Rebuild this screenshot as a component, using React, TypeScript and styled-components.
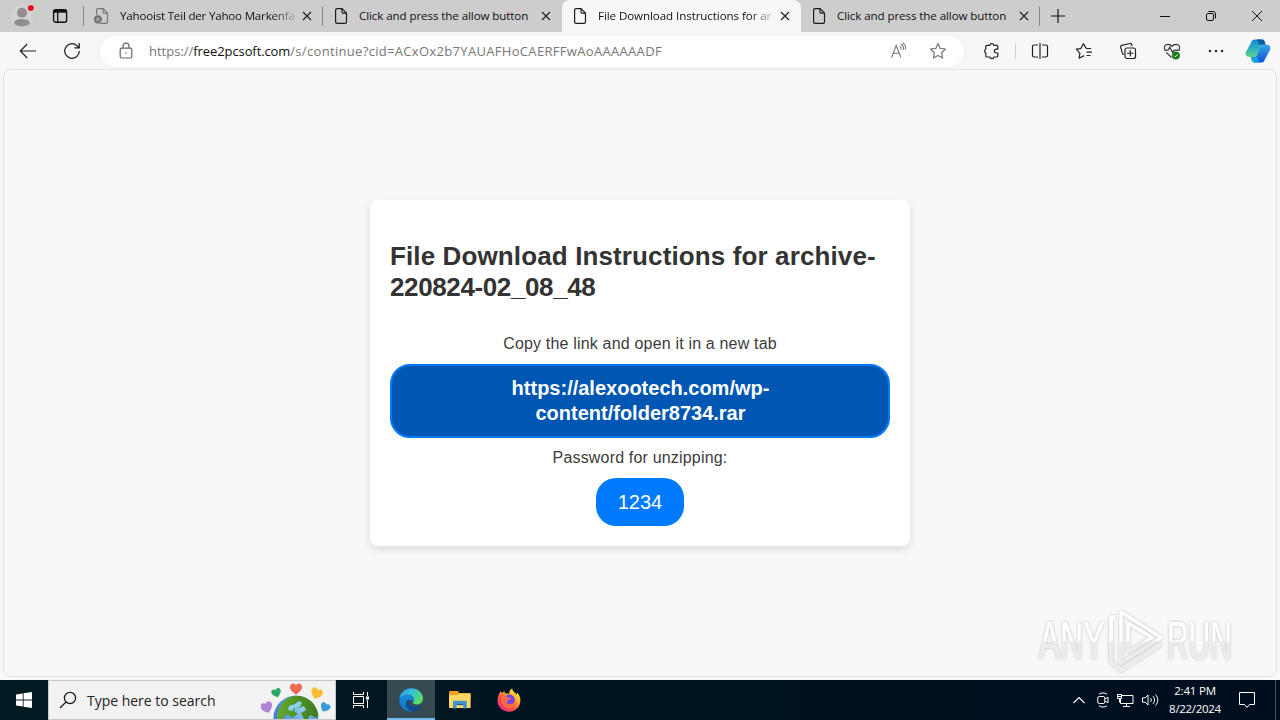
import React from 'react';
import styled, { createGlobalStyle } from 'styled-components';

const GlobalStyle = createGlobalStyle`
  * {
    box-sizing: border-box;
  }
  body {
    margin: 0;
    background: #f7f7f7;
    font-family: 'Open Sans', 'Noto Sans', sans-serif;
    overflow: hidden;
  }
  svg {
    display: block;
    flex: none;
  }
`;

interface TabItem {
  title: string;
  spacing: number;
  active?: boolean;
  blocked?: boolean;
  fade?: boolean;
}

const tabs: TabItem[] = [
  { title: 'Yahooist Teil der Yahoo Markenfa', spacing: -0.21, blocked: true, fade: true },
  { title: 'Click and press the allow button', spacing: -0.1 },
  { title: 'File Download Instructions for ar', spacing: -0.09, active: true, fade: true },
  { title: 'Click and press the allow button', spacing: -0.1 },
];

const PageIcon: React.FC<{ blocked?: boolean }> = ({ blocked }) => (
  <svg width="16" height="18" viewBox="0 0 16 18" fill="none" stroke={blocked ? '#777' : '#1b1b1b'} strokeWidth="1.2">
    <path d="M2.6 3.2c0-.9.6-1.6 1.5-1.6h5l4.4 4.6v8.6c0 .9-.6 1.6-1.5 1.6H4.1c-.9 0-1.5-.7-1.5-1.6z" />
    <path d="M9 1.8v3.1c0 .8.5 1.3 1.3 1.3h3" />
    {blocked && (
      <>
        <circle cx="3.8" cy="12.4" r="4.6" fill="#777" stroke="#cdcdcd" strokeWidth="0.8" />
        <path d="m2.4 11 2.8 2.8m0-2.8-2.8 2.8" stroke="#cdcdcd" strokeWidth="1" />
      </>
    )}
  </svg>
);

const CloseIcon = () => (
  <svg width="10" height="10" viewBox="0 0 10 10" stroke="#222" strokeWidth="1.2">
    <path d="m1 1 8 8M9 1 1 9" />
  </svg>
);

const ProfileIcon = () => (
  <svg width="28" height="32" viewBox="0 0 28 32">
    <circle cx="14" cy="16" r="11" fill="#d2d2d2" />
    <circle cx="14" cy="12.7" r="5" fill="#918e8c" />
    <ellipse cx="14" cy="22.7" rx="7.8" ry="3.7" fill="#918e8c" />
    <circle cx="22.8" cy="8" r="3.9" fill="#e8d5d5" />
    <circle cx="22.8" cy="8" r="3" fill="#e0101c" />
  </svg>
);

const TabActionsIcon = () => (
  <svg width="16" height="16" viewBox="0 0 16 16" fill="none" stroke="#111">
    <rect x="1.6" y="1.6" width="13" height="12.6" rx="2" strokeWidth="1.4" />
    <path d="M2 3.2h12" strokeWidth="3" />
    <path d="M5.7 4v10" strokeWidth="1.3" />
  </svg>
);

const ToolbarIcons = {
  back: (
    <svg width="18" height="18" viewBox="0 0 18 18" fill="none" stroke="#222" strokeWidth="1.2">
      <path d="M17 9H1.5M8.200 2 1.300 9l6.900 7" />
    </svg>
  ),
  reload: (
    <svg width="18" height="18" viewBox="0 0 18 18" fill="none" stroke="#222" strokeWidth="1.3">
      <path d="M16.300 9a7.300 7.300 0 1 1-2.600-5.600l2.300 2.200M16.200 1v4.800h-4.800" />
    </svg>
  ),
  lock: (
    <svg width="14" height="18" viewBox="0 0 14 18" fill="none" stroke="#666" strokeWidth="1.2">
      <rect x="1.2" y="6.2" width="11.6" height="9.8" rx="1.5" />
      <path d="M4 6V4.200a3 3 0 0 1 6 0V6" />
      <circle cx="7" cy="11" r=".8" fill="#666" stroke="none" />
    </svg>
  ),
  star: (
    <svg width="18" height="18" viewBox="0 0 18 18" fill="none" stroke="#777" strokeWidth="1.2" strokeLinejoin="round">
      <path d="m9 1.500 2.200 4.900 5.300.6-3.900 3.700 1 5.400L9 13.500l-4.600 2.600 1-5.400L1.500 7l5.300-.6z" />
    </svg>
  ),
  puzzle: (
    <svg width="18" height="18" viewBox="0 0 18 18" fill="none" stroke="#222" strokeWidth="1.2" strokeLinejoin="round">
      <path d="M3.800 3.300h3a2.100 2.100 0 0 1 4.100 0h2.900c.6 0 1 .4 1 1v2.900h-1.500a1.900 1.900 0 0 0 0 3.800h1.500v3c0 .6-.4 1-1 1h-2.900a2.100 2.100 0 0 1-4.100 0h-3c-.6 0-1-.4-1-1v-3a2.100 2.100 0 0 1 0-3.800V4.300c0-.6.4-1 1-1z" />
    </svg>
  ),
  split: (
    <svg width="18" height="18" viewBox="0 0 18 18" fill="none" stroke="#222" strokeWidth="1.2">
      <path d="M7 3H3a1.500 1.500 0 0 0-1.500 1.500v9A1.500 1.500 0 0 0 3 15h4M11 3h4a1.500 1.500 0 0 1 1.500 1.500v9A1.500 1.500 0 0 1 15 15h-4M9 1v16" />
    </svg>
  ),
  favorites: (
    <svg width="18" height="18" viewBox="0 0 18 18" fill="none" stroke="#222" strokeWidth="1.2" strokeLinejoin="round">
      <path d="M16.200 6.500h-4.800L8.300 1.700 5.900 6.600l-4.600.6 3.600 3.900-.8 5.100 5-2.600M11.500 10.200H17M11.500 13.500h4" />
    </svg>
  ),
  collections: (
    <svg width="18" height="18" viewBox="0 0 18 18" fill="none" stroke="#222" strokeWidth="1.2" strokeLinecap="round">
      <rect x="6" y="6" width="10.5" height="10.5" rx="2" />
      <path d="M11.250 8.500v5.500M8.500 11.250h5.500M13 3.600l-.3-1.100a1.500 1.500 0 0 0-1.900-1L2.700 3.300a1.500 1.500 0 0 0-1 1.900l1.700 6.100c.1.500.5.900 1 1" />
    </svg>
  ),
  health: (
    <svg width="18" height="18" viewBox="0 0 18 18" fill="none" stroke="#333" strokeWidth="1.2" strokeLinejoin="round">
      <path d="M1.700 7.300C.8 4.500 2.300 2.300 4.800 2.300 6.800 2.300 8.200 3.200 9 4.400c.8-1.200 2.200-2.100 4.200-2.100 2.500 0 4 2.200 3.100 5M3.300 10.300 8.500 15.500M1 8.200h4L6.800 5l2.700 5.500 1.700-2.300H17" />
      <circle cx="12.9" cy="13.5" r="4" fill="#187b1b" stroke="none" />
      <path d="m11.200 13.600 1.200 1.200 2.200-2.300" stroke="#fff" strokeWidth="1" />
    </svg>
  ),
  more: (
    <svg width="18" height="18" viewBox="0 0 18 18" fill="#222">
      <circle cx="3" cy="9" r="1.2" />
      <circle cx="9" cy="9" r="1.2" />
      <circle cx="15" cy="9" r="1.2" />
    </svg>
  ),
};

const ReadAloudIcon = () => (
  <svg width="18" height="18" viewBox="0 0 18 18" fill="none" stroke="#777" strokeWidth="1.1">
    <path d="M1.500 15.500 6.200 3.500l4.700 12M3.200 11.300h6M9.800 4.300a4.500 4.500 0 0 1 1.400 3.500M11 2a6.500 6.500 0 0 1 2.600 5.800M12.500.6a8 8 0 0 1 3.200 7" />
  </svg>
);

const CopilotIcon = () => (
  <svg width="26" height="24" viewBox="0 0 26 24">
    <defs>
      <linearGradient id="cpLeft" x1="0" y1="0" x2="0" y2="1">
        <stop offset="0" stopColor="#1588d8" />
        <stop offset=".55" stopColor="#2fb4bd" />
        <stop offset="1" stopColor="#63d184" />
      </linearGradient>
      <linearGradient id="cpRight" x1="0" y1="0" x2="0" y2="1">
        <stop offset="0" stopColor="#39a5e8" />
        <stop offset="1" stopColor="#0a4fd6" />
      </linearGradient>
    </defs>
    <path d="M6.300 3C7 1.200 8.200.5 10 .5h7c1.400 0 2.200.8 2.700 2.300l.9 3H16l-3.600 10.500c-.5 1.200-1.300 1.700-2.500 1.700H4.500C1.600 18-.2 16.200.8 13.200z" fill="url(#cpLeft)" />
    <path d="M11.500.5H17c1.400 0 2.200.8 2.700 2.300l.9 3h-5.400c-1 0-1.500-.5-1.800-1.500L12.900 2z" fill="#0c5f9f" />
    <path d="M19.600 21c-.6 1.700-1.500 2.500-3 2.500H9.500c-1.500 0-2.300-.9-2.700-2.500L6 18h3.600c1.200 0 2-.5 2.500-1.700L15.400 7.500c.4-1.200 1.200-1.700 2.400-1.700h4c2.900 0 4.200 2 3.400 4.700z" fill="url(#cpRight)" />
    <path d="M6 18h5.200c1 0 1.500.5 1.800 1.500l.6 2.200c.3 1 .9 1.500 1.700 1.800H9.500c-1.500 0-2.300-.9-2.700-2.500z" fill="#08a5e8" />
  </svg>
);

const Watermark = () => (
  <WatermarkBox>
    <svg width="204" height="72" viewBox="0 0 204 72" overflow="visible">
      <defs>
        <linearGradient id="wm" x1="0" y1="0" x2="0" y2="72" gradientUnits="userSpaceOnUse">
          <stop offset=".5" stopColor="#ffffff" />
          <stop offset=".51" stopColor="#ececec" />
        </linearGradient>
        <filter id="wmShadow" x="-10%" y="-10%" width="120%" height="120%">
          <feDropShadow dx="0" dy="0" stdDeviation="1.7" floodColor="#000" floodOpacity=".26" />
        </filter>
      </defs>
      <g filter="url(#wmShadow)" fill="url(#wm)">
        <g fontFamily="'Liberation Sans Narrow', 'Liberation Sans', Arial, sans-serif" fontSize="53">
          <text x="0" y="54" transform="translate(5 0) scale(.6 1)">
            ANY
          </text>
          <text x="0" y="54" transform="translate(133 0) scale(.565 1)">
            RUN
          </text>
        </g>
        <g fill="none" stroke="url(#wm)" strokeWidth="4" strokeLinejoin="round">
          <path d="M87 7v51l40-25.500zM94 18v29l24-14.500z" strokeWidth="3" />
          <path d="M81 12c-3 0-4 1-4 4v41l10 8 40-26" />
        </g>
      </g>
    </svg>
  </WatermarkBox>
);

const GlobeArt = () => (
  <svg width="70" height="38" viewBox="0 0 70 38">
    <defs>
      <radialGradient id="sea" cx=".65" cy=".3" r=".8">
        <stop offset="0" stopColor="#8fd0f2" />
        <stop offset=".6" stopColor="#4f93e6" />
        <stop offset="1" stopColor="#3b62d0" />
      </radialGradient>
      <linearGradient id="land" x1="0" y1="0" x2="1" y2="0">
        <stop offset="0" stopColor="#64a82c" />
        <stop offset="1" stopColor="#3d7a20" />
      </linearGradient>
      <clipPath id="globeClip">
        <circle cx="35" cy="37" r="22.5" />
      </clipPath>
      <path id="heart" d="M0 5.500C-4.500 2.500-6 .2-6-2c0-3.700 4.400-4.600 6-1.700C1.600-6.600 6-5.700 6-2 6 .2 4.500 2.500 0 5.500z" />
    </defs>
    <circle cx="35" cy="37" r="22.5" fill="url(#sea)" />
    <g clipPath="url(#globeClip)" fill="url(#land)">
      <path d="M23 20c6-6 17-7 25-3 5 4 9 10 10 17l-3 3-6-3-2 4h-4l-3-6 5-3-2-4-5 2-4-1-1 4 4 3-6 4-5-4-5 5h-5c0-8 3-14 7-18z" />
    </g>
    <path d="m28 25 6-2 4-3 3 2-2 4-6 1-2 3-4-1z" fill="#8cd0ef" />
    <use href="#heart" transform="translate(35 8)" fill="#ef6a55" />
    <use href="#heart" transform="translate(15.500 12) rotate(-18) scale(.8)" fill="#2ba866" />
    <use href="#heart" transform="translate(55.500 12.500) rotate(22) scale(.98)" fill="#f6bd32" />
    <use href="#heart" transform="translate(5.800 26.500) rotate(-20)" fill="#b184d6" />
    <use href="#heart" transform="translate(64 26.500) rotate(28) scale(.82)" fill="#399bdd" />
  </svg>
);

const WindowsLogo = () => (
  <svg width="16" height="16" viewBox="0 0 16 16" fill="#fff">
    <path d="M0 2.400 6.800 1.400v6.200H0zM7.600 1.300 16 0v7.600H7.600zM0 8.400h6.800v6.200L0 13.600zM7.600 8.400H16V16l-8.400-1.300z" />
  </svg>
);

const EdgeLogo = () => (
  <svg width="24" height="24" viewBox="0 0 24 24">
    <defs>
      <linearGradient id="edgeTop" x1="0" y1="0" x2="1" y2="0.600">
        <stop offset="0" stopColor="#2695e4" />
        <stop offset=".5" stopColor="#35bfd8" />
        <stop offset="1" stopColor="#5ce060" />
      </linearGradient>
      <linearGradient id="edgeLow" x1="0" y1="0" x2="0" y2="1">
        <stop offset="0" stopColor="#168be0" />
        <stop offset="1" stopColor="#1072c6" />
      </linearGradient>
    </defs>
    <path d="M.3 10.800C1.300 4.600 6 .2 12.200.2 19 .2 24 5 24 10.600c0 3.700-2.900 6-6.200 6-2.500 0-4-.8-4-1.500 0-.8 1.200-1.200 1.200-3.300 0-2.800-2.700-5-6.100-5-3.900 0-7 1.700-8.600 4z" fill="url(#edgeTop)" />
    <path d="M.3 10.800c1.600-2.700 4.900-4.100 8.100-4.100 3.600 0 6.600 2.200 6.600 5.200 0 .9-.3 1.600-.7 2.100-1-2.100-3.500-3-5.300-1.900-2.900 1.900-1.600 7.900 4.700 11.600C6.600 24.500 0 19 .3 10.800z" fill="url(#edgeLow)" />
    <path d="M9 12.100c-4.200 2.700-1.800 11 5.100 11.600 3.600-.3 6.700-2.600 8.300-5.600.3-.7-.2-1-.8-.7-4.700 2.400-12.700.9-12.600-5.300z" fill="#114a8b" />
  </svg>
);

const FolderIcon = () => (
  <svg width="22" height="20" viewBox="0 0 22 20">
    <path d="M0 2.500C0 1.600.5 1 1.400 1h7.200L10.500 3H20c1 0 1.600.5 1.600 1.400V9H0z" fill="#eca421" />
    <path d="M0 5.200h8.500l1.800-1.400h11.300V18H0z" fill="#ffd766" />
    <path d="M4 18.500V12c0-.8.5-1.300 1.300-1.300h11.200c.8 0 1.300.5 1.300 1.300v6.500h-3.500v-3.300H7.500v3.300z" fill="#4094cd" />
    <path d="M7.500 14.500h6.800" stroke="#27658d" />
  </svg>
);

const FirefoxIcon = () => (
  <svg width="24" height="24" viewBox="0 0 24 24">
    <defs>
      <linearGradient id="fox" x1=".85" y1=".1" x2=".2" y2=".95">
        <stop offset="0" stopColor="#ffe83f" />
        <stop offset=".35" stopColor="#ffa52c" />
        <stop offset=".65" stopColor="#ff4f45" />
        <stop offset="1" stopColor="#ec2789" />
      </linearGradient>
    </defs>
    <path d="M3.500 3.200 5.200 5l2.100-2 .9 2.400c1.600-.2 3 .1 4 .7C11.800 3.500 13 1.500 15.300.4c-.1 3.300 3.400 4.200 4.600 6.500l.2-2.300c2.200 2.200 3.300 5 3.300 7.800 0 6.100-5 11.300-11.500 11.300S.5 18.700.5 12.800c0-3.600 1.200-6.900 3-9.600z" fill="url(#fox)" />
    <circle cx="12.4" cy="12" r="5.400" fill="#7542e4" />
    <path d="M4.500 8.700c2.400-1.300 4.700-.9 6.800.7l3 .6c.2 1.500-2.500 1.800-3.200 2.400-.7.700.2 2.300-1.800 2.100 1.500 2 4.800 1.700 6.600.8 1.500-.8 2-2.500 1.700-4.500 1.600 2 1.900 4 1.200 6.100-1.100 2.500-4 3.900-7.200 3.600-5.700-.3-8.300-6-7.100-11.800z" fill="#ff713b" fillOpacity=".85" />
  </svg>
);

const App: React.FC = () => {
  return (
    <Screen>
      <GlobalStyle />
      <TabStrip>
        <TabStripLead>
          <ProfileIcon />
          <TabActionsIcon />
        </TabStripLead>
        {tabs.map((tab, index) => (
          <Tab key={index} $active={tab.active} $noDivider={tabs[index + 1]?.active}>
            <PageIcon blocked={tab.blocked} />
            <TabTitle $spacing={tab.spacing} $fade={tab.fade}>
              {tab.title}
            </TabTitle>
            <CloseIcon />
          </Tab>
        ))}
        <NewTab>
          <svg width="14" height="14" viewBox="0 0 14 14" stroke="#111" strokeWidth="1.2">
            <path d="M7 0v14M0 7h14" />
          </svg>
        </NewTab>
        <WindowButtons>
          <svg width="10" height="10" viewBox="0 0 10 10" stroke="#111">
            <path d="M0 5.500h10" />
          </svg>
          <svg width="10" height="10" viewBox="0 0 10 10" fill="none" stroke="#111">
            <rect x=".5" y="2.5" width="7" height="7" rx="1.5" />
            <path d="M2.500.5H7A2.500 2.500 0 0 1 9.500 3v4.500" />
          </svg>
          <svg width="10" height="10" viewBox="0 0 10 10" stroke="#111">
            <path d="m0 0 10 10M10 0 0 10" />
          </svg>
        </WindowButtons>
      </TabStrip>

      <Toolbar>
        <NavButtons>
          {ToolbarIcons.back}
          {ToolbarIcons.reload}
        </NavButtons>
        <AddressBar>
          {ToolbarIcons.lock}
          <Url>
            https://<b>free2pcsoft.com</b>
            <UrlPath>/s/continue?cid=ACxOx2b7YAUAFHoCAERFFwAoAAAAAADF</UrlPath>
          </Url>
          <ReadAloudIcon />
          {ToolbarIcons.star}
        </AddressBar>
        <ToolButtons>
          {ToolbarIcons.puzzle}
          <ToolDivider />
          {ToolbarIcons.split}
          {ToolbarIcons.favorites}
          {ToolbarIcons.collections}
          {ToolbarIcons.health}
          {ToolbarIcons.more}
        </ToolButtons>
        <CopilotIcon />
      </Toolbar>

      <Viewport>
        <Card>
          <Heading>
            <HeadingLine $spacing={0.12}>File Download Instructions for archive-</HeadingLine>
            <HeadingLine $spacing={-0.38}>220824-02_08_48</HeadingLine>
          </Heading>
          <Note>Copy the link and open it in a new tab</Note>
          <LinkBox>
            https://alexootech.com/wp-
            <br />
            content/folder8734.rar
          </LinkBox>
          <Note>Password for unzipping:</Note>
          <Password>1234</Password>
        </Card>
        <Watermark />
      </Viewport>

      <Taskbar>
        <TaskButton $width={48}>
          <WindowsLogo />
        </TaskButton>
        <SearchBox>
          <svg width="18" height="18" viewBox="0 0 18 18" fill="none" stroke="#1b1b1b" strokeWidth="1.3">
            <circle cx="11" cy="7" r="5.6" />
            <path d="m7 11-6 6" />
          </svg>
          <SearchText>Type here to search</SearchText>
          <GlobeArt />
        </SearchBox>
        <TaskButton $width={51}>
          <TaskViewIcon />
        </TaskButton>
        <TaskButton $width={48} $active>
          <EdgeLogo />
        </TaskButton>
        <TaskButton $width={49}>
          <FolderIcon />
        </TaskButton>
        <TaskButton $width={49}>
          <FirefoxIcon />
        </TaskButton>
        <Tray>
          <svg width="12" height="8" viewBox="0 0 12 8" fill="none" stroke="#fff" strokeWidth="1.1">
            <path d="m.5 7 5.500-5.500L11.500 7" />
          </svg>
          <svg width="12" height="16" viewBox="0 0 12 16" fill="none" stroke="#fff">
            <rect x=".8" y="4.5" width="7" height="7" rx="1.5" />
            <path d="M8 7l3-1.800v5.600L8 9M2 2.200C4.300.5 7.700.5 10 2.200M2 13.800c2.300 1.700 5.700 1.700 8 0" />
          </svg>
          <svg width="17" height="15" viewBox="0 0 17 15" fill="none" stroke="#fff">
            <path d="M5 2.500h11v8H3.500V6M9.500 10.500v3M6 13.500h7M.5 1.500h4v4h-4zM2.500 5.500v4M1 3.500h3" />
          </svg>
          <svg width="17" height="14" viewBox="0 0 17 14" fill="none" stroke="#fff">
            <path d="M.5 4.800h2.700L6 2v10L3.200 9.200H.5zM8.500 5c1 1.200 1 2.800 0 4M11 3.200c2 2.200 2 5.400 0 7.600M13.500 1.500c3 3.200 3 7.800 0 11" />
          </svg>
          <Clock>
            <span>2:41 PM</span>
            <ClockDate>8/22/2024</ClockDate>
          </Clock>
          <svg width="16" height="17" viewBox="0 0 16 17" fill="none" stroke="#fff">
            <path d="M.5.500h15v12h-5l-2.500 3-2.500-3h-5z" />
          </svg>
        </Tray>
      </Taskbar>
    </Screen>
  );
};

const TaskViewIcon = () => (
  <svg width="17" height="16" viewBox="0 0 17 16" fill="none" stroke="#fff">
    <path d="M.5 0v2.500h10V0M.5 16v-2.500h10V16M.5 4.500h10v7H.5zM14.500 0v4M14.500 8v8" />
    <path d="M13 4.500h3v3h-3z" fill="#fff" stroke="none" />
  </svg>
);

const Screen = styled.div`
  width: 1280px;
  height: 720px;
  display: flex;
  flex-direction: column;
  overflow: hidden;
`;

const TabStrip = styled.div`
  flex: none;
  height: 32px;
  display: flex;
  background: #cdcdcd;
`;

const TabStripLead = styled.div`
  width: 84px;
  display: flex;
  align-items: center;
  padding-left: 8px;
  gap: 16px;
  background: linear-gradient(#888, #888) right center / 1px 20px no-repeat;
`;

const Tab = styled.div<{ $active?: boolean; $noDivider?: boolean }>`
  width: 239px;
  display: flex;
  align-items: center;
  padding: 0 10px;
  border-radius: 8px 8px 0 0;
  background: ${props =>
    props.$active
      ? '#f7f7f7'
      : props.$noDivider
        ? 'none'
        : 'linear-gradient(#888, #888) right center / 1px 20px no-repeat'};
`;

const TabTitle = styled.div<{ $spacing: number; $fade?: boolean }>`
  width: 177px;
  margin: 0 5px 1px 10px;
  overflow: hidden;
  white-space: nowrap;
  font-size: 11.6px;
  line-height: 18px;
  letter-spacing: ${props => props.$spacing}px;
  color: #111;
  ${props => props.$fade && 'mask-image: linear-gradient(90deg, #000 152px, transparent 180px);'}
`;

const NewTab = styled.div`
  padding: 9px 0 0 11px;
`;

const WindowButtons = styled.div`
  display: flex;
  align-items: center;
  gap: 36px;
  margin-left: auto;
  padding-right: 18px;
`;

const Toolbar = styled.div`
  flex: none;
  height: 37px;
  display: flex;
  align-items: center;
  padding-right: 9px;
  background: #f7f7f7;
`;

const NavButtons = styled.div`
  width: 100px;
  display: flex;
  gap: 26px;
  padding-left: 19px;
`;

const AddressBar = styled.div`
  width: 864px;
  height: 31px;
  margin-top: 1px;
  display: flex;
  align-items: center;
  padding: 0 17px 0 19px;
  border-radius: 16px;
  background: #fff;
  box-shadow: 0 0 2px rgba(0, 0, 0, 0.08);
`;

const Url = styled.div`
  flex: 1;
  margin-left: 16px;
  font-size: 13px;
  line-height: 20px;
  color: #777;
  white-space: nowrap;
  b {
    font-weight: 400;
    letter-spacing: -0.1px;
    color: #111;
  }
  & + svg {
    margin-right: 21px;
  }
`;

const UrlPath = styled.span`
  letter-spacing: 0.32px;
`;

const ToolButtons = styled.div`
  flex: 1;
  display: flex;
  align-items: center;
  gap: 26px;
  padding-left: 19px;
`;

const ToolDivider = styled.div`
  width: 1px;
  height: 16px;
  margin: 0 -11px 0 -12px;
  background: #d0d0d0;
`;

const Viewport = styled.div`
  position: relative;
  flex: none;
  height: 608px;
  margin: 0 3px 3px;
  display: flex;
  justify-content: center;
  align-items: flex-start;
  padding-top: 130px;
  border: 1px solid #e2e2e2;
  border-radius: 8px;
  background: #f8f8f8;
`;

const Card = styled.div`
  width: 540px;
  height: 346px;
  display: flex;
  flex-direction: column;
  align-items: center;
  padding: 41px 20px 20px;
  border-radius: 8px;
  background: #fff;
  box-shadow: 0 4px 8px rgba(0, 0, 0, 0.1);
  font-family: 'Liberation Sans', Arial, sans-serif;
`;

const Heading = styled.h1`
  width: 500px;
  margin: 0 0 31px;
  font-size: 26px;
  line-height: 31px;
  color: #333;
`;

const HeadingLine = styled.div<{ $spacing: number }>`
  letter-spacing: ${props => props.$spacing}px;
`;

const Note = styled.p`
  margin: 0 0 11px;
  font-size: 16px;
  line-height: 19px;
  letter-spacing: 0.18px;
  color: #3c3c3c;
`;

const LinkBox = styled.div`
  width: 500px;
  height: 74px;
  margin-bottom: 10px;
  padding: 10px 0 0 1px;
  border: 2px solid #007bff;
  border-radius: 20px;
  background: #0056b3;
  color: #fff;
  text-align: center;
  font-size: 20px;
  font-weight: 700;
  line-height: 25px;
`;

const Password = styled.div`
  width: 88px;
  height: 48px;
  border-radius: 20px;
  background: #007bff;
  color: #fff;
  text-align: center;
  font-size: 20px;
  line-height: 49px;
`;

const WatermarkBox = styled.div`
  position: absolute;
  right: 38px;
  bottom: -1px;
`;

const Taskbar = styled.div`
  flex: none;
  height: 40px;
  display: flex;
  background: linear-gradient(90deg, #001a22, #000e20);
`;

const TaskButton = styled.div<{ $width: number; $active?: boolean }>`
  width: ${props => props.$width}px;
  display: flex;
  align-items: center;
  justify-content: center;
  ${props => props.$active && 'background: #354a51; box-shadow: inset 0 -2px #76b9ed;'}
`;

const SearchBox = styled.div`
  width: 288px;
  display: flex;
  align-items: center;
  padding-left: 10px;
  border: 1px solid #c5c8ca;
  background: #f2f2f2;
  overflow: hidden;
`;

const SearchText = styled.div`
  width: 174px;
  margin: 1px 0 0 10px;
  font-size: 14px;
  letter-spacing: -0.02px;
  color: #222;
  white-space: nowrap;
`;

const Tray = styled.div`
  flex: 1;
  display: flex;
  align-items: center;
  justify-content: flex-end;
  gap: 8px;
  padding-right: 25px;
  background: linear-gradient(#46525e, #46525e) right 4px top / 1px 40px no-repeat;
  & > svg:first-child {
    margin-right: 4px;
  }
`;

const Clock = styled.div`
  width: 54px;
  display: flex;
  flex-direction: column;
  align-items: center;
  margin: 0 9px 0 1px;
  font-size: 11.5px;
  line-height: 18px;
  letter-spacing: -0.2px;
  color: #fff;
  white-space: nowrap;
`;

const ClockDate = styled.span`
  letter-spacing: -0.3px;
`;

export default App;
